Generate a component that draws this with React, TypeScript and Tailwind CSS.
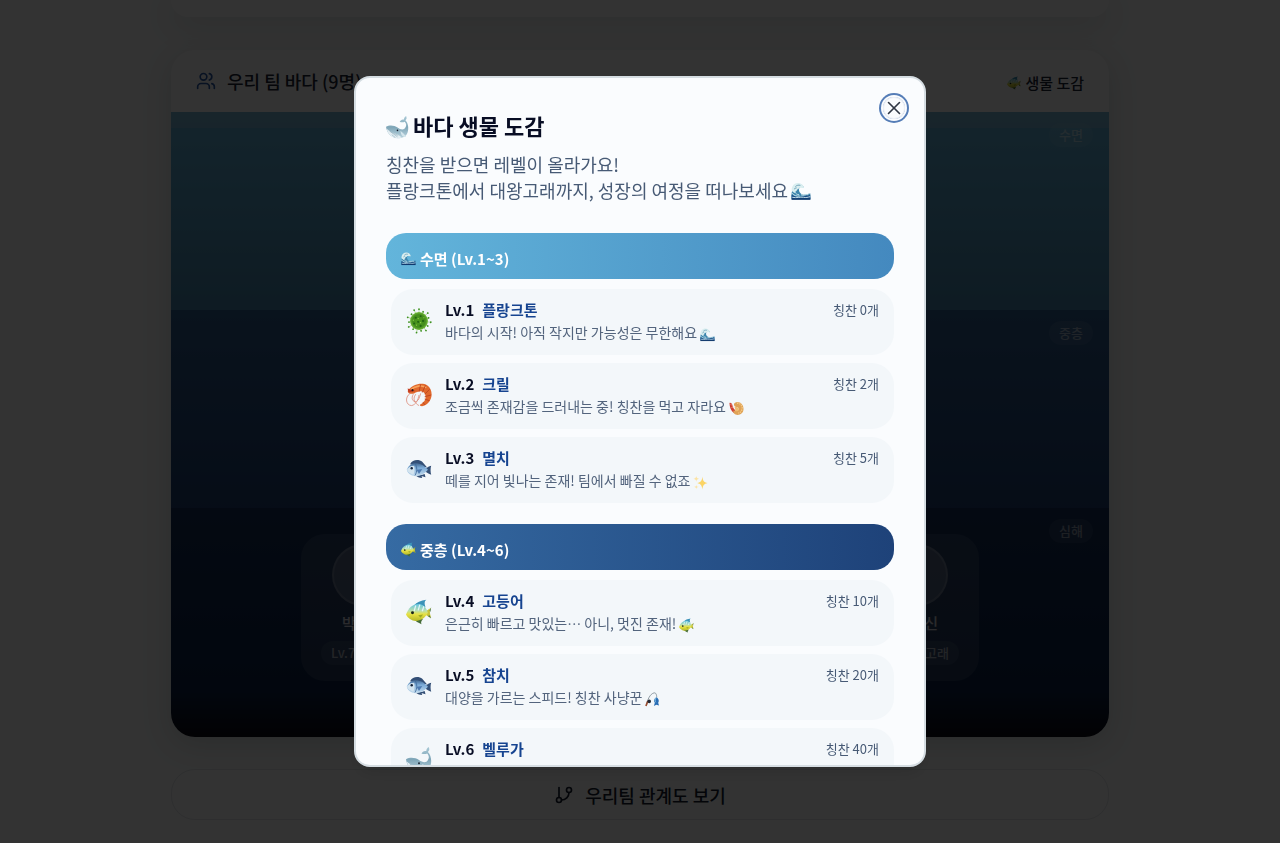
import React from "react";
import { GitBranch, Users, X } from "lucide-react";
import clsx from "clsx";

type IconProps = { className?: string };

const Whale = ({ className }: IconProps) => (
  <svg viewBox="0 0 32 32" className={className} aria-hidden="true">
    <defs>
      <linearGradient id="whaleBody" x1="0" y1="0" x2="0" y2="1">
        <stop offset="0" stopColor="#a9c9d6" />
        <stop offset="0.5" stopColor="#7fa6b8" />
        <stop offset="1" stopColor="#b9d3de" />
      </linearGradient>
    </defs>
    <path
      d="M0 15c5-3 12-2 16 1 4 3 9 4 11 0 2-3 1-6-1-8-2 1-5 1-7 0 2-3 4-3 6-3 0-2 1-4 3-5 1 3 1 4-1 6 4 4 5 12 3 17-2 6-7 8-14 8C8 31 1 24 0 15z"
      fill="url(#whaleBody)"
    />
    <path d="M1 18c5 3 10 6 16 8l5 4c-10 3-19-3-21-12z" fill="#e4eef3" />
    <path d="M5 21c4 3 7 5 11 8M3 19c5 4 9 6 14 8M8 26l5 4" stroke="#87a9ba" strokeWidth="0.8" fill="none" />
    <path d="M20 21c3 1 5 5 8 7-2 3-7 1-8-7z" fill="#d3e5ec" />
    <circle cx="16" cy="20" r="1.1" fill="#111827" />
  </svg>
);

const Wave = ({ className }: IconProps) => (
  <svg viewBox="0 0 32 32" className={className} aria-hidden="true">
    <path d="M1 29C0 20 2 10 8 6c5-3 11 0 13 5-4-2-7-2-8 1-1 5 2 9 7 10 4 0 7-2 11-2v9z" fill="#3d86ad" />
    <path d="M1 15C1 8 5 3 11 3c6 0 9 4 10 8-2 1-3-1-5 0-2-1-4 0-4 2-2 0-3 1-3 3-2 0-2 2-3 3-2-1-4-2-5-4z" fill="#d9eef0" />
    <path d="M1 22c4 2 8 4 14 3 5 0 9-3 16-2v6H1z" fill="#174a83" />
    <path d="M1 19c3 4 8 6 13 5M6 17c1 3 4 5 7 5M2 26c8 2 12-1 18 0 4 1 7 0 11-1M16 22c4 2 8-1 12 0" fill="none" stroke="#cfe8ef" strokeWidth="1.5" />
    <path d="M7 9c2-2 5-3 8-2M5 13c1-1 2-2 4-2" stroke="#4d89a7" strokeWidth="1.2" fill="none" />
    <path d="M1 28h30v2H1z" fill="#0b3266" />
  </svg>
);

const MICROBE_SPIKES = [0, 24, 48, 72, 96, 120, 144, 168, 192, 216, 240, 264, 288, 312, 336];

const Microbe = ({ className }: IconProps) => (
  <svg viewBox="0 0 32 32" className={className} aria-hidden="true">
    <defs>
      <radialGradient id="microbeBody">
        <stop offset="0" stopColor="#4e9b1d" />
        <stop offset="0.7" stopColor="#438c1c" />
        <stop offset="1" stopColor="#72b93a" />
      </radialGradient>
    </defs>
    {MICROBE_SPIKES.map((angle, i) => (
      <g key={angle} transform={`rotate(${angle} 16 16)`}>
        <path d={i % 2 ? "M16 7V3" : "M16 7V1.6"} stroke="#9ac97a" strokeWidth="0.8" />
        <circle cx="16" cy={i % 2 ? 3.6 : 1.4} r="1.1" fill="#3f9222" />
      </g>
    ))}
    <circle cx="16" cy="16" r="11" fill="url(#microbeBody)" />
    <g fill="#226612">
      <circle cx="12" cy="12" r="1.3" />
      <circle cx="18" cy="10" r="1.2" />
      <circle cx="21" cy="16" r="1.4" />
      <circle cx="15" cy="17" r="1.4" />
      <circle cx="10" cy="19" r="1.2" />
      <circle cx="18" cy="22" r="1.3" />
    </g>
    <g fill="#93d34e">
      <circle cx="15" cy="13" r="0.8" />
      <circle cx="18" cy="18" r="0.8" />
      <circle cx="13" cy="21" r="0.7" />
      <circle cx="22" cy="12" r="0.7" />
      <circle cx="9" cy="15" r="0.7" />
    </g>
  </svg>
);

const Shrimp = ({ className }: IconProps) => (
  <svg viewBox="0 0 32 32" className={className} aria-hidden="true">
    <path d="M2 11C8 3 19 0 26 4c7 5 7 15 2 21-3 4-8 6-11 4 0-2 3-2 4-4 4-3 4-9 1-12-4-3-8-1-12 1-4 1-7 1-8-3z" fill="#e0682c" />
    <path d="M5 10C11 5 20 3 25 7" stroke="#f8a35c" strokeWidth="2" fill="none" />
    <path d="M18 3l-2 9M24 4l-4 9M29 9l-6 6M31 16l-8 2M29 23l-6-2M23 28l-2-3" stroke="#b63e1d" strokeWidth="1" fill="none" />
    <path d="M5 14C-2 19 0 29 7 29c5-1 8-7 9-13M9 15c-3 5-1 10 4 9 3-2 4-6 5-10M12 15c-5 7 0 12 4 14" stroke="#dc8d7b" strokeWidth="1" fill="none" />
    <path d="M2 8l10 3-9 2z" fill="#c43d22" />
    <circle cx="8" cy="10" r="1.3" fill="#261c1a" />
  </svg>
);

const Fish = ({ className }: IconProps) => (
  <svg viewBox="0 0 32 32" className={className} aria-hidden="true">
    <defs>
      <linearGradient id="fishBody" x1="0" y1="0" x2="0" y2="1">
        <stop offset="0" stopColor="#40658f" />
        <stop offset="0.35" stopColor="#79a9d6" />
        <stop offset="1" stopColor="#c8dfef" />
      </linearGradient>
    </defs>
    <path d="M5 10c3-6 11-6 15-3l6 7-11-2zM11 23l7-1 2 5c-4 0-6-1-9-4zM17 24l6-2 1 4zM23 16c3-1 5-4 8-4-1 3-1 8 0 11-3-1-5-3-8-4z" fill="#334f76" />
    <path d="M1 17c2-6 7-9 13-8 6 1 9 4 13 8-4 5-9 8-15 8C6 25 2 21 1 17z" fill="url(#fishBody)" />
    <path d="M11 9c3 5 3 10 0 15" stroke="#3e6797" strokeWidth="1" fill="none" />
    <path d="M13 17l7-1-4 6z" fill="#4c79b0" />
    <path d="M1 17c2-3 5-5 9-5 1 3 1 8-1 11-4-1-7-3-8-6z" fill="#d3e4ef" />
    <circle cx="7" cy="15" r="1.5" fill="#14223a" />
  </svg>
);

const TropicalFish = ({ className }: IconProps) => (
  <svg viewBox="0 0 32 32" className={className} aria-hidden="true">
    <defs>
      <linearGradient id="tropicalBody" x1="0" y1="0" x2="0" y2="1">
        <stop offset="0" stopColor="#62c4e2" />
        <stop offset="0.4" stopColor="#b9dfb0" />
        <stop offset="0.6" stopColor="#e8e244" />
        <stop offset="1" stopColor="#b5b928" />
      </linearGradient>
    </defs>
    <path d="M10 8C13 4 18 2 25 1c-3 2-2 6-1 9z" fill="#3b92b8" />
    <path d="M9 24c3 4 6 5 10 7-1-3 0-4 2-6z" fill="#456c37" />
    <path d="M24 16c2-2 4-4 7-5-2 3-2 6 0 12-3-1-5-2-7-4z" fill="#c9c43a" />
    <path d="M29 14l2-4-1 6zM29 20l2 4-4-3z" fill="#46734b" />
    <path d="M0 19c3-8 8-13 15-13 7 0 10 5 12 11-3 6-9 10-15 10C7 27 2 23 0 19z" fill="url(#tropicalBody)" />
    <path d="M12 8l-2 7M17 7l-2 7M22 9l-2 6" stroke="#e2f5f7" strokeWidth="1.6" />
    <circle cx="8" cy="17" r="1.8" fill="#17211b" />
    <path d="M15 20l6-1-3 4z" fill="#9eab25" />
  </svg>
);

const FriedShrimp = ({ className }: IconProps) => (
  <svg viewBox="0 0 32 32" className={className} aria-hidden="true">
    <path d="M1 4c3-1 5 1 6 4 1 5 3 9 7 12l-3 6C4 21 1 12 1 4z" fill="#cf3f32" />
    <path d="M3 7l4 2M5 14l4-1" stroke="#f09b82" strokeWidth="1.5" />
    <path d="M12 4C21-1 31 6 31 17c0 9-9 15-17 12-4-2-6-6-4-9 3 1 6 2 9 0 3-3 1-7-3-7-5 0-7-6-4-9z" fill="#dfa257" />
    <path d="M17 5c7-1 12 5 11 12-1 5-4 8-8 9" stroke="#f5cb85" strokeWidth="3" strokeDasharray="3 2" fill="none" />
    <path d="M12 13c4-1 8 0 9 4 0 4-3 5-7 5z" fill="#efbd72" />
  </svg>
);

const Sparkles = ({ className }: IconProps) => (
  <svg viewBox="0 0 32 32" className={className} aria-hidden="true">
    <path d="M20 3c1 9 3 12 11 14-8 2-10 5-11 14-1-9-3-12-11-14 8-2 10-5 11-14z" fill="#fbd465" />
    <path d="M7 1c0 5 2 6 6 7-4 1-6 3-6 7 0-4-2-6-6-7 4-1 6-2 6-7zM7 20c0 3 1 5 5 5-4 1-5 3-5 6 0-3-1-5-5-6 4 0 5-2 5-5z" fill="#fce3a3" />
  </svg>
);

const FishingPole = ({ className }: IconProps) => (
  <svg viewBox="0 0 32 32" className={className} aria-hidden="true">
    <path d="M3 29C5 16 11 4 19 2c4-1 6 3 6 10" fill="none" stroke="#6f7d85" strokeWidth="1.6" />
    <path d="M2 30l4-11" stroke="#994c2d" strokeWidth="3.5" />
    <circle cx="9" cy="20" r="3.8" fill="#252a35" />
    <path d="M24 11c5 2 7 8 4 12l2 6-6-2-5 3 2-7c-3-4-2-9 3-12z" fill="#286db5" />
    <path d="M24 12c-3 4-3 7-1 10" stroke="#8ac4e7" strokeWidth="2" fill="none" />
  </svg>
);

const ZONES = [
  {
    name: "수면 (Lv.1~3)",
    Icon: Wave,
    bar: "from-[#63b5db] to-[#4489bf]",
    creatures: [
      { level: 1, name: "플랑크톤", praise: 0, text: "바다의 시작! 아직 작지만 가능성은 무한해요", Icon: Microbe, Tail: Wave },
      { level: 2, name: "크릴", praise: 2, text: "조금씩 존재감을 드러내는 중! 칭찬을 먹고 자라요", Icon: Shrimp, Tail: FriedShrimp },
      { level: 3, name: "멸치", praise: 5, text: "떼를 지어 빛나는 존재! 팀에서 빠질 수 없죠", Icon: Fish, Tail: Sparkles },
    ],
  },
  {
    name: "중층 (Lv.4~6)",
    Icon: TropicalFish,
    bar: "from-[#366ba3] to-[#1e4279]",
    creatures: [
      { level: 4, name: "고등어", praise: 10, text: "은근히 빠르고 맛있는… 아니, 멋진 존재!", Icon: TropicalFish, Tail: TropicalFish },
      { level: 5, name: "참치", praise: 20, text: "대양을 가르는 스피드! 칭찬 사냥꾼", Icon: Fish, Tail: FishingPole },
      { level: 6, name: "벨루가", praise: 40, text: "", Icon: Whale, Tail: Wave },
    ],
  },
];

const DepthLabel = ({ children }: { children: React.ReactNode }) => (
  <span className="absolute top-[11px] right-4 rounded-full bg-white/8 px-[10px] py-[2px] text-[13px] leading-5 font-medium text-white/50">
    {children}
  </span>
);

type MemberProps = { name: string; level: string; end?: boolean };

const Member = ({ name, level, end }: MemberProps) => (
  <div className="flex w-[124px] flex-col items-center rounded-3xl bg-white/10 pt-[10px] pb-4">
    <div className="size-[62px] rounded-full border-2 border-white/15 bg-white/20" />
    <div className={clsx("mt-[5px] w-[42px] text-[15px] leading-6 font-medium text-white/80", end && "text-right")}>
      {name}
    </div>
    <div
      className={clsx(
        "mt-[6px] w-[84px] rounded-full bg-white/8 px-[10px] py-[2px] text-[13px] leading-5 font-medium text-white/60",
        end && "text-right"
      )}
    >
      {level}
    </div>
  </div>
);

const TeamSea = () => (
  <div className="mx-auto w-full max-w-[938px]">
    <div className="h-[17px] rounded-b-3xl bg-white shadow-[0_8px_30px_rgba(0,50,50,0.15)]" />

    <section className="mt-[33px] overflow-hidden rounded-3xl bg-white shadow-[0_8px_30px_rgba(0,50,50,0.15)]">
      <header className="flex h-[62px] items-center justify-between px-[25px]">
        <h2 className="flex items-center gap-[11px] text-[18px] leading-6 font-medium text-[#1c2536]">
          <Users className="size-5 text-[#2b5aa8]" />
          우리 팀 바다 (9명)
        </h2>
        <button type="button" className="flex items-center gap-1 pt-1 text-[15px] leading-6 font-medium text-[#1c2536]">
          <TropicalFish className="size-[14px]" />
          생물 도감
        </button>
      </header>

      <div className="relative h-[198px] bg-linear-to-b from-[#63b5db] to-[#4686ad]">
        <DepthLabel>수면</DepthLabel>
        <div className="absolute inset-x-0 top-0 h-4 bg-[#8cb9d4]/60" />
      </div>
      <div className="relative h-[198px] bg-linear-to-b from-[#315f90] to-[#1e3f73]">
        <DepthLabel>중층</DepthLabel>
      </div>
      <div className="relative bg-linear-to-b from-[#16305a] from-0% via-[#0a2147] via-80% to-[#0a0a14] pb-14">
        <DepthLabel>심해</DepthLabel>
        <div className="flex justify-between px-[130px] pt-[26px]">
          <Member name="박" level="Lv.7" />
          <Member name="신" level="고래" end />
        </div>
      </div>
    </section>

    <button
      type="button"
      className="mt-8 flex h-[51px] w-full items-center justify-center gap-[11px] rounded-3xl border border-gray-200 bg-white text-[18px] leading-6 font-medium text-[#141d2e]"
    >
      <GitBranch className="size-5" />
      우리팀 관계도 보기
    </button>
  </div>
);

const CreatureGuide = () => (
  <div className="fixed inset-0 flex items-center justify-center bg-black/80">
    <div
      role="dialog"
      aria-modal="true"
      aria-labelledby="guide-title"
      className="relative h-[82vh] w-full max-w-[572px] overflow-hidden rounded-2xl border-2 border-[#d5dde2] bg-[#fafcfe] px-[30px] pt-[33px] shadow-lg"
    >
      <h2 id="guide-title" className="flex items-end gap-1 text-[22px] leading-7 font-semibold text-[#080d24]">
        <Whale className="size-[23px]" />
        바다 생물 도감
      </h2>
      <p className="mt-3 text-[18px] leading-[26px] text-[#475a75]">
        칭찬을 받으면 레벨이 올라가요!
        <br />
        플랑크톤에서 대왕고래까지, 성장의 여정을 떠나보세요
        <Wave className="ml-[3px] inline size-5 align-[-3px]" />
      </p>

      <div className="mt-[30px] flex flex-col gap-[21px]">
        {ZONES.map((zone) => (
          <section key={zone.name}>
            <h3
              className={clsx(
                "flex h-[46px] items-center gap-1 rounded-[20px] bg-linear-to-r px-[15px] pt-[6px] text-[15px] leading-6 font-semibold text-white",
                zone.bar
              )}
            >
              <zone.Icon className="size-[15px]" />
              {zone.name}
            </h3>
            <ul className="mt-[10px] ml-[5px] flex flex-col gap-2">
              {zone.creatures.map((c) => (
                <li
                  key={c.level}
                  className="flex items-center gap-[13px] rounded-[22px] bg-[#f3f7fa] px-[15px] pt-2 pb-3"
                >
                  <c.Icon className="mt-0.5 size-[26px] shrink-0" />
                  <div className="flex-1">
                    <div className="flex items-center justify-between leading-[26px]">
                      <div className="flex gap-2 text-[15px] font-semibold text-[#080d24]">
                        <span>Lv.{c.level}</span>
                        <span className="text-[#164490]">{c.name}</span>
                      </div>
                      <span className="text-[13px] text-[#475a75]">칭찬 {c.praise}개</span>
                    </div>
                    <p className="flex h-5 items-center gap-[3px] text-[14px] text-[#53647d]">
                      {c.text}
                      <c.Tail className="mt-1 size-[15px]" />
                    </p>
                  </div>
                </li>
              ))}
            </ul>
          </section>
        ))}
      </div>

      <button
        type="button"
        aria-label="닫기"
        className="absolute top-[19px] right-[19px] flex size-[22px] items-center justify-center rounded-full border border-[#eceff5] text-[#303844] ring-2 ring-[#557db7] ring-offset-2 ring-offset-[#fafcfe]"
      >
        <X className="size-[22px] shrink-0" strokeWidth={1.75} />
      </button>
    </div>
  </div>
);

const App = () => (
  <div className="h-screen overflow-hidden bg-[#fcfdfd] px-4 font-['Noto_Sans_CJK_KR',sans-serif]">
    <TeamSea />
    <CreatureGuide />
  </div>
);

export default App;
